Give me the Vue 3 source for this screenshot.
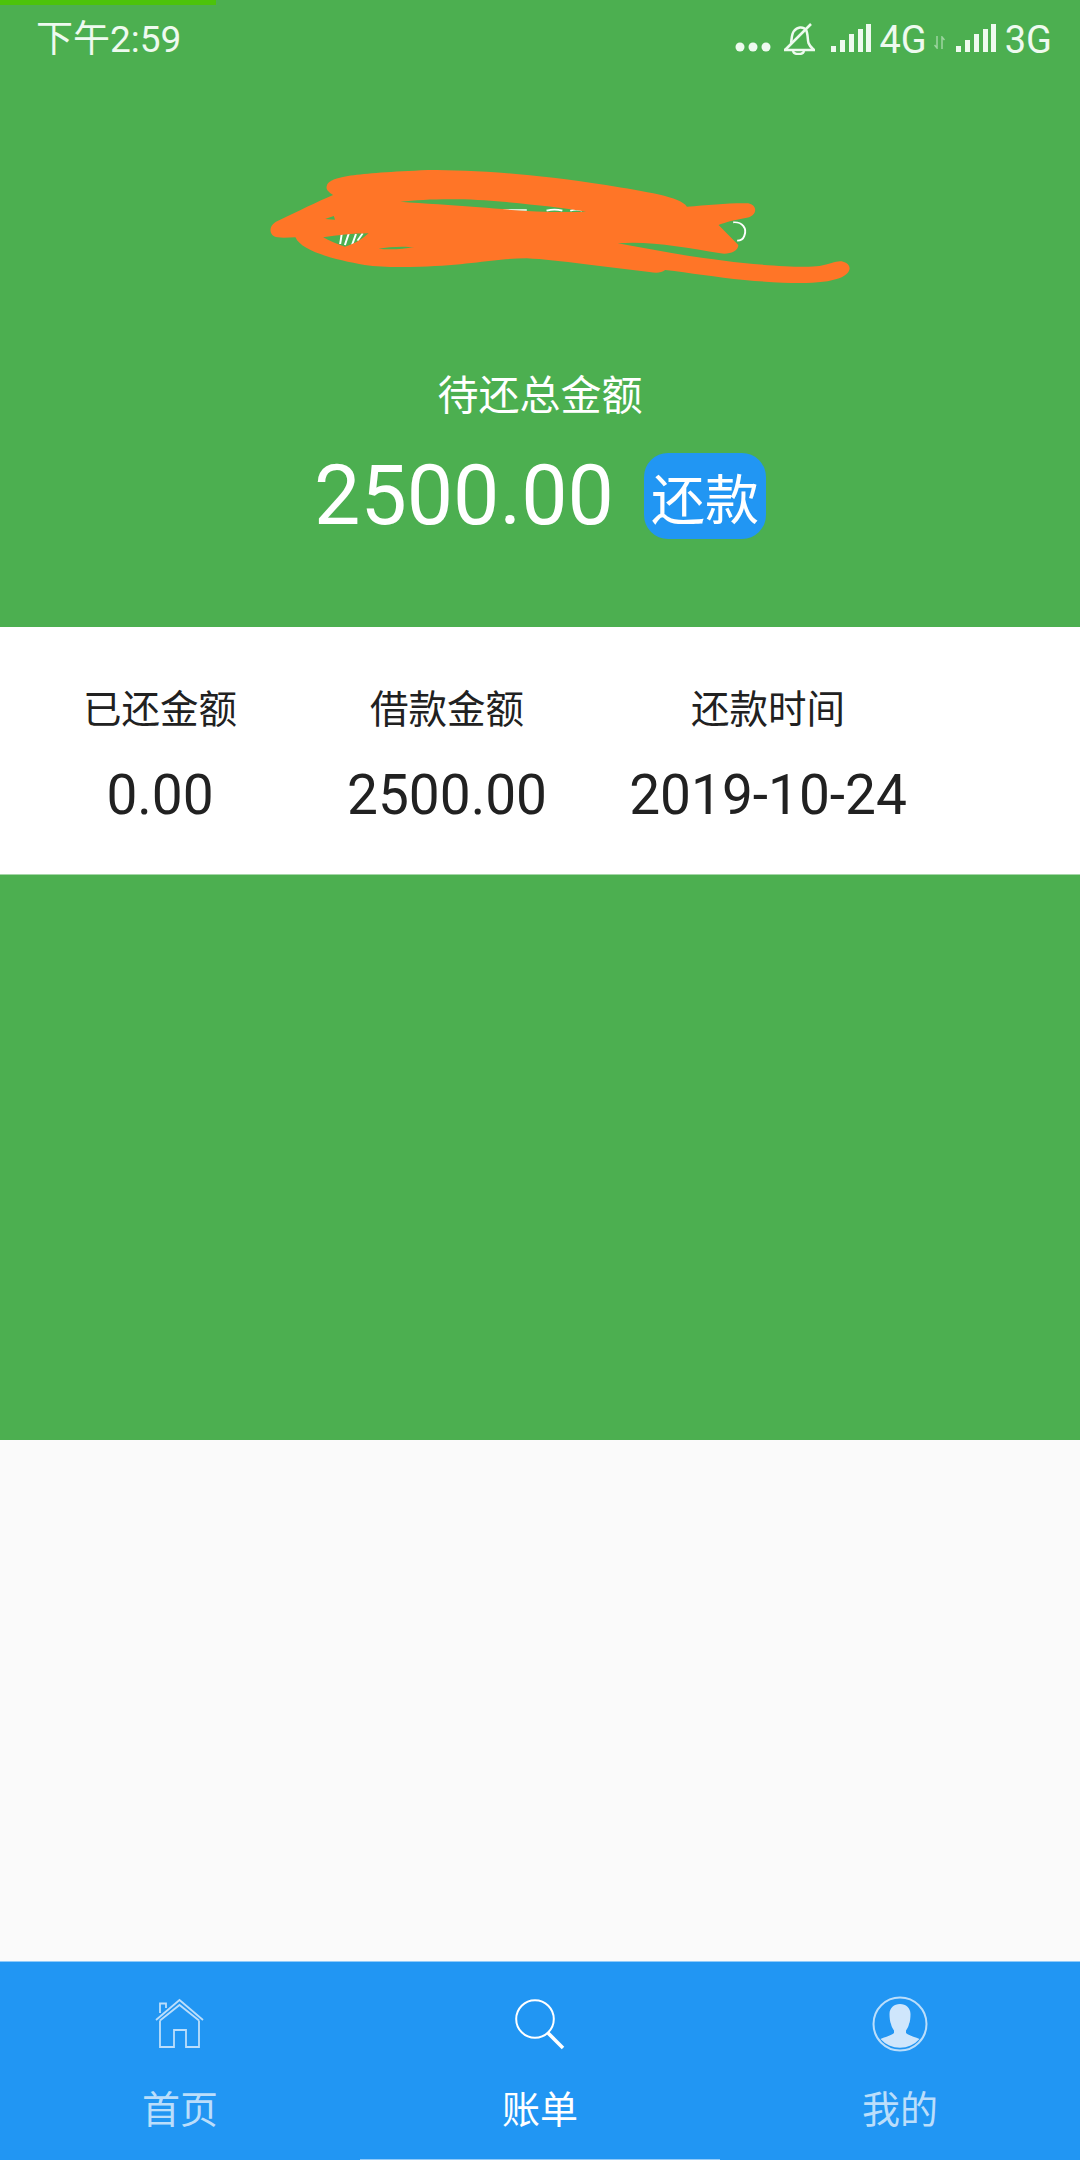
<script setup>
const stats = [
  { label: '已还金额', value: '0.00' },
  { label: '借款金额', value: '2500.00' },
  { label: '还款时间', value: '2019-10-24' },
]
const tabs = [
  { key: 'home', label: '首页' },
  { key: 'bill', label: '账单', active: true },
  { key: 'me', label: '我的' },
]
const bars = [
  { x: 0, h: 6 },
  { x: 9, h: 12 },
  { x: 18, h: 18 },
  { x: 27, h: 23 },
  { x: 35, h: 28 },
]
</script>

<template>
  <div class="page">
    <section class="hero">
      <div class="progress"></div>

      <div class="status">
        <span class="time">下午2:59</span>
        <div class="status-icons">
          <svg class="dots" width="36" height="12" viewBox="0 0 36 12">
            <circle cx="5" cy="6" r="4.5" /><circle cx="18" cy="6" r="4.5" /><circle cx="31" cy="6" r="4.5" />
          </svg>
          <svg class="bell" width="32" height="33" viewBox="0 0 32 33" fill="none" stroke="currentColor" stroke-width="2.500">
            <path d="M2 28L28 2" />
            <path d="M8 21C9 16 8.500 12 11 9C14 5 20 4 23 8C25 11 24.500 18 25.500 21C26.500 24 29 26 31 28H1" />
            <path d="M10 29C11 33 20 33 21 29" />
          </svg>
          <svg class="signal" width="40" height="28" viewBox="0 0 40 28">
            <rect v-for="b in bars" :key="b.x" :x="b.x" :y="28 - b.h" width="5" :height="b.h" />
          </svg>
          <span class="net">4G</span>
          <svg class="arrows" width="11" height="13" viewBox="0 0 11 13" fill="none" stroke="currentColor" stroke-width="1.500">
            <path d="M3 0V12L0.500 9" />
            <path d="M8 13V1L10.500 4" />
          </svg>
          <svg class="signal" width="40" height="28" viewBox="0 0 40 28">
            <rect v-for="b in bars" :key="b.x" :x="b.x" :y="28 - b.h" width="5" :height="b.h" />
          </svg>
          <span class="net">3G</span>
        </div>
      </div>

      <p class="total-label">待还总金额</p>
      <div class="total-row">
        <span class="total">2500.00</span>
        <button class="repay">还款</button>
      </div>

      <!-- scribble over the hidden account name -->
      <svg class="scribble" viewBox="0 0 1568 450" preserveAspectRatio="none">
        <g fill="none" stroke="#fff" stroke-width="5">
          <path d="M232 252L228 282M250 250L240 285M268 252L258 285M285 250L272 272" />
          <path d="M640 180H700M750 182Q770 176 790 182M810 182Q825 176 840 182" />
          <path d="M1222 217C1245 215 1258 235 1250 258C1247 268 1240 272 1232 272" />
          <path d="M945 272H965M1015 270Q1030 276 1045 270" />
        </g>
        <path
          fill="#ff7527"
          fill-rule="evenodd"
          d="M195 105C205 80 260 70 450 60C560 60 700 68 900 105C1000 125 1090 140 1105 170C1160 165 1220 158 1260 160C1285 165 1285 200 1250 205C1225 210 1200 218 1185 225L1235 285C1235 305 1210 314 1190 310C1100 292 1010 272 930 280C1020 300 1120 322 1200 332C1280 345 1400 355 1440 348C1470 342 1485 330 1500 335C1522 342 1525 368 1490 385C1450 402 1380 404 1250 390C1180 382 1110 368 1050 360C1040 368 1030 370 1010 366C900 352 780 330 700 325C620 325 560 345 430 350C380 352 330 352 290 345C220 330 130 305 115 262C100 262 85 264 70 262C45 258 45 222 75 210C120 185 170 155 210 135C198 125 190 118 195 105Z
             M380 155C450 145 560 145 640 155C720 165 790 172 850 185C760 190 660 180 580 172C510 165 440 160 380 155Z
             M185 262C220 256 260 250 300 250C285 265 270 280 240 290C220 282 200 272 185 262Z
             M325 296C350 290 390 288 415 292C385 298 350 300 325 296Z
             M190 207L212 198L215 209Z"
        />
      </svg>
    </section>

    <section class="stats">
      <div v-for="s in stats" :key="s.label" class="stat">
        <span class="stat-label">{{ s.label }}</span>
        <span class="stat-value">{{ s.value }}</span>
      </div>
    </section>

    <section class="band"></section>
    <section class="blank"></section>

    <nav class="tabbar">
      <div v-for="t in tabs" :key="t.key" class="tab" :class="{ active: t.active }">
        <svg v-if="t.key === 'home'" width="50" height="50" viewBox="0 0 50 50" fill="none" stroke="currentColor" stroke-width="1.800">
          <path d="M1 21L24.500 1L48 21" />
          <path d="M5 21.500L24.500 6L44 21.500" />
          <path d="M5 21.500V48H19V31H31V48H44V21.500" />
          <path d="M5 14V4.500H11V9" />
        </svg>
        <svg v-else-if="t.key === 'bill'" width="50" height="50" viewBox="0 0 50 50" fill="none" stroke="currentColor">
          <circle cx="20" cy="20" r="18.800" stroke-width="2" />
          <path d="M33 34L48 49" stroke-width="3.600" />
        </svg>
        <svg v-else width="56" height="56" viewBox="0 0 56 56">
          <circle cx="28" cy="28" r="26.500" fill="none" stroke="currentColor" stroke-width="2" />
          <path
            fill="#cfe6fc"
            d="M28 8C22 8 17.500 12 17.500 18C17.500 22 18 26 19 28C19.500 31 21 33 22 34.500V37C19 39.500 13 41 8.500 43A26 26 0 0 0 47.500 43C43 41 37 39.500 34 37V34.500C35 33 36.500 31 37 28C38 26 38.500 22 38.500 18C38.500 12 34 8 28 8Z"
          />
        </svg>
        <span class="tab-label">{{ t.label }}</span>
      </div>
    </nav>
  </div>
</template>

<style>
body { margin: 0; }
</style>

<style scoped>
.page {
  width: 1080px;
  height: 2160px;
  display: flex;
  flex-direction: column;
  background: #fafafa;
  font-family: Roboto, "Noto Sans CJK SC", sans-serif;
}
.hero {
  position: relative;
  height: 627px;
  flex-shrink: 0;
  background: #4caf50;
  color: #fff;
  display: flex;
  flex-direction: column;
  align-items: center;
}
.progress {
  position: absolute;
  top: 0;
  left: 0;
  width: 216px;
  height: 5px;
  background: #4cc30a;
}
.status {
  align-self: stretch;
  height: 80px;
  padding: 0 28px 0 36px;
  display: flex;
  align-items: center;
  justify-content: space-between;
  color: #eefaef;
}
.time { font-size: 37px; margin-top: -8px; }
.status-icons {
  display: flex;
  align-items: center;
}
.dots { fill: currentColor; margin: 14px 12px 0 0; }
.bell { margin-right: 16px; margin-top: -4px; }
.signal { fill: currentColor; margin-top: -5px; }
.net { font-size: 38px; margin-left: 9px; }
.arrows { opacity: 0.5; margin: 4px 11px 0 7px; }
.total-label {
  margin: 287px 0 0;
  font-size: 41px;
  line-height: 58px;
}
.total-row {
  margin-top: 28px;
  display: flex;
  align-items: center;
  gap: 30px;
}
.total {
  font-size: 82.5px;
  line-height: 86px;
}
.repay {
  width: 122px;
  height: 86px;
  padding: 0;
  border: 0;
  border-radius: 24px;
  background: #2196f3;
  color: #fff;
  font-family: inherit;
  font-size: 54px;
}
.scribble {
  position: absolute;
  left: 250px;
  top: 150px;
  width: 620px;
  height: 150px;
}
.stats {
  height: 248px;
  flex-shrink: 0;
  box-sizing: border-box;
  padding-top: 6px;
  background: #fff;
  border-bottom: 1px solid #a5d6a7;
  display: grid;
  grid-template-columns: 320px 254px 388px;
  align-content: center;
  color: #212121;
}
.stat {
  display: flex;
  flex-direction: column;
  align-items: center;
  gap: 27px;
}
.stat-label {
  font-size: 38.5px;
  line-height: 56px;
}
.stat-value {
  font-size: 55px;
  line-height: 60px;
}
.band {
  height: 565px;
  flex-shrink: 0;
  background: #4caf50;
}
.blank { flex: 1; }
.tabbar {
  height: 199px;
  flex-shrink: 0;
  box-sizing: border-box;
  background: #2196f3;
  border-top: 1px solid #90caf9;
  display: grid;
  grid-template-columns: repeat(3, 1fr);
}
.tab {
  box-sizing: border-box;
  height: 198px;
  padding-top: 34px;
  display: flex;
  flex-direction: column;
  align-items: center;
  color: #bbdefb;
}
.tab svg { height: 56px; }
.tab.active {
  color: #fff;
  border-bottom: 1px solid #90caf9;
}
.tab-label {
  margin-top: 32px;
  font-size: 38px;
  line-height: 52px;
}
</style>
